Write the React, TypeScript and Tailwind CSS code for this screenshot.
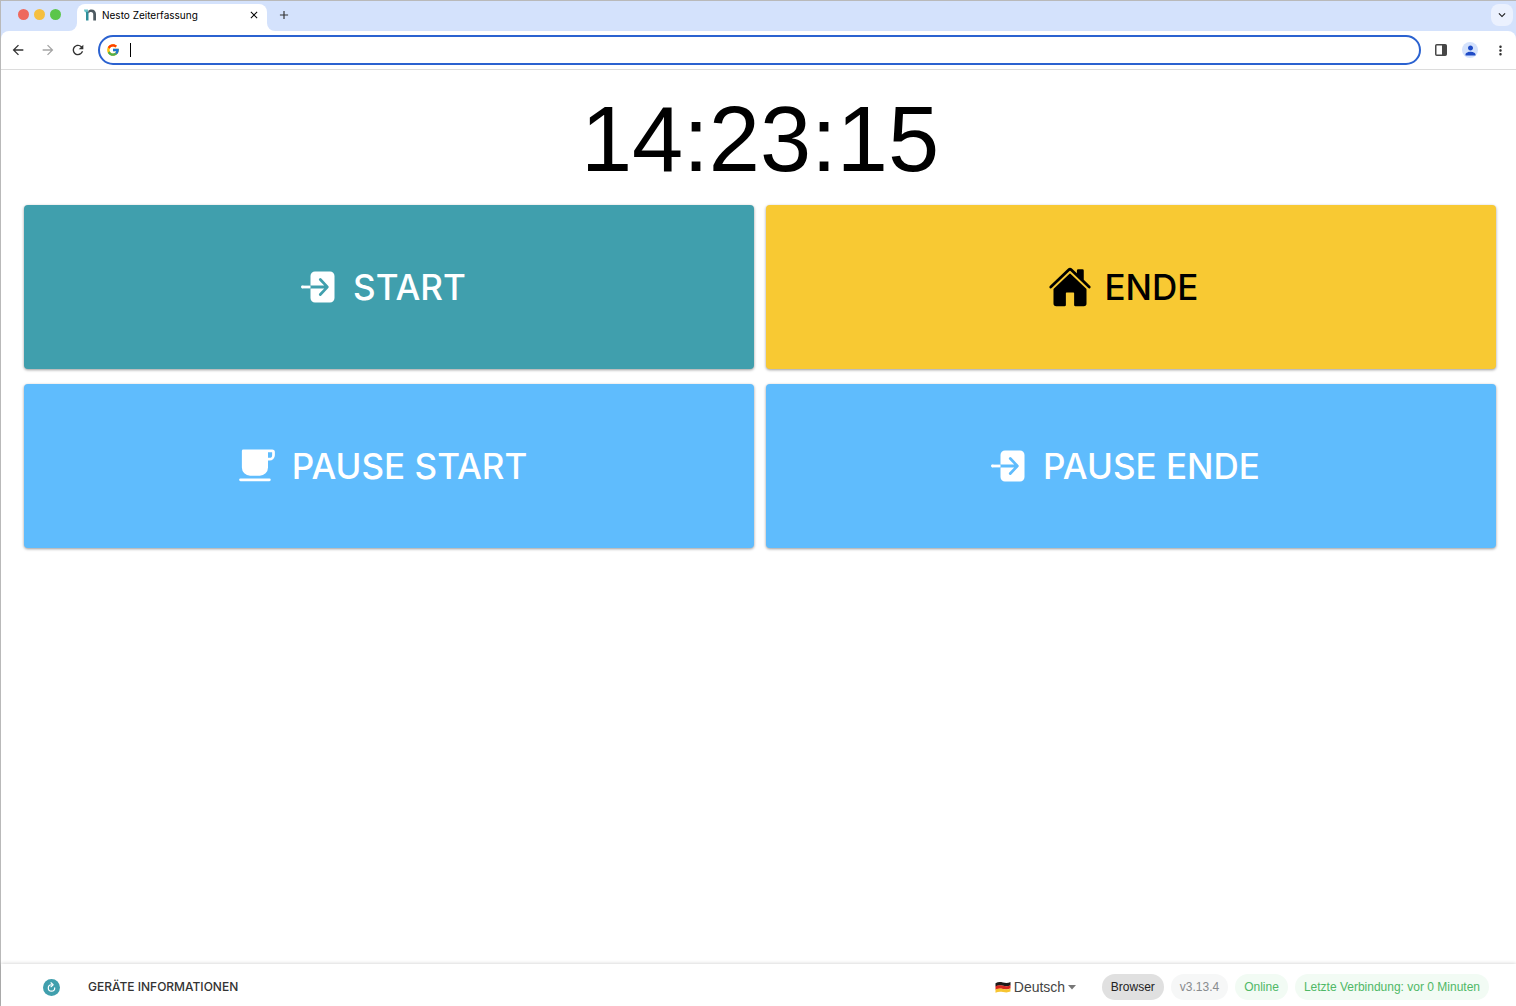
import type { ReactNode } from "react"
import { FcGoogle } from "react-icons/fc"
import { IoCafe, IoHome } from "react-icons/io5"
import { MdAdd, MdArrowBack, MdArrowForward, MdClose, MdExpandMore, MdMoreVert, MdPerson, MdRefresh } from "react-icons/md"

function NestoLogo() {
  return (
    <svg className="w-3 h-3" viewBox="0 0 24 24" fill="none" aria-hidden="true">
      <path d="M0 1h8v6H4.500C2 7 0 4.500 0 1Z" fill="#6cc5cb" />
      <path d="M4 5.500h5V23H4Z" fill="#2f8f9a" />
      <path d="M8.500 3.500C10.500 1.700 12.500 1 15 1c5.500 0 9 3.500 9 9v13h-5.500V11c0-3.200-1.500-5-4.500-5-2.200 0-4 1-5.500 3Z" fill="#4d5a61" />
    </svg>
  )
}

function SidePanelIcon() {
  return (
    <svg className="w-3 h-3" viewBox="0 0 12 12" aria-hidden="true">
      <rect x="0.75" y="0.75" width="10.500" height="10.500" rx="1" fill="none" stroke="#474747" strokeWidth="1.500" />
      <path d="M7 1h4v10H7Z" fill="#474747" />
    </svg>
  )
}

function EnterIcon() {
  return (
    <svg className="w-11 h-11" viewBox="0 0 44 44" fill="none" aria-hidden="true">
      <path
        d="M19 6.500h15a4.500 4.500 0 0 1 4.500 4.500v22a4.500 4.500 0 0 1-4.500 4.500H19a4.500 4.500 0 0 1-4.500-4.500v-9.600h13.700l-4.900 5a1.400 1.400 0 0 0 2 2l7-7.400a1.400 1.400 0 0 0 0-2l-7-7.400a1.400 1.400 0 0 0-2 2l4.900 5H14.500V11A4.500 4.500 0 0 1 19 6.500Z"
        fill="currentColor"
      />
      <path d="M6.400 22h8.100" stroke="currentColor" strokeWidth="2.800" />
      <circle cx="6.400" cy="22" r="1.400" fill="currentColor" />
    </svg>
  )
}

function GermanFlag() {
  return (
    <svg className="w-4 h-3" viewBox="0 0 16 12" aria-hidden="true">
      <path d="M.5 2.200C3 .8 5 .8 8 1.500s5 .6 7.500-.5v3.400c-2.500 1-4.700 1-7.500.4S3 4.300.5 5.500Z" fill="#1d1a18" />
      <path d="M.5 5.300C3 4 5 4 8 4.700s5 .6 7.500-.5v3.400c-2.500 1-4.700 1-7.500.4S3 7.500.5 8.700Z" fill="#d8281f" />
      <path d="M.5 8.500C3 7.300 5 7.300 8 7.900s5 .6 7.500-.5v3.200c-2.500 1-4.700 1-7.500.4S3 10.600.5 11.700Z" fill="#f7c531" />
    </svg>
  )
}

function TabStrip() {
  return (
    <div className="flex items-end justify-between h-[30px]">
      <div className="flex items-end">
        <div className="flex items-center gap-[5px] h-[27px] pl-[17px] pr-4 pb-[6px]">
          <button aria-label="Schließen" className="w-[11px] h-[11px] rounded-full bg-[#ee695e]"></button>
          <button aria-label="Minimieren" className="w-[11px] h-[11px] rounded-full bg-[#f5bf3f]"></button>
          <button aria-label="Maximieren" className="w-[11px] h-[11px] rounded-full bg-[#5bc64a]"></button>
        </div>
        <div className="relative flex items-center w-[190px] h-[27px] px-[7px] pb-[6px] rounded-t-lg bg-white">
          {/* Curved feet of the active tab */}
          <span className="absolute bottom-0 right-full w-2 h-2 bg-white">
            <span className="block w-2 h-2 rounded-br-lg bg-[#d4e2fc]"></span>
          </span>
          <span className="absolute bottom-0 left-full w-2 h-2 bg-white">
            <span className="block w-2 h-2 rounded-bl-lg bg-[#d4e2fc]"></span>
          </span>
          <NestoLogo />
          <span className="flex-1 ml-[6px] text-[10px] leading-4 text-black">Nesto Zeiterfassung</span>
          <button aria-label="Tab schließen">
            <MdClose className="w-3 h-3 text-black" />
          </button>
        </div>
        <button aria-label="Neuer Tab" className="flex items-center h-[27px] pb-[6px] ml-[10px]">
          <MdAdd className="w-[14px] h-[14px] text-[#333]" />
        </button>
      </div>
      <button aria-label="Tabs durchsuchen" className="flex items-center justify-center w-[22px] h-[22px] mb-[5px] mr-[3px] rounded-lg bg-[#ebf1fe]">
        <MdExpandMore className="w-[14px] h-[14px] text-[#1f1f1f]" />
      </button>
    </div>
  )
}

function Toolbar() {
  return (
    <div className="flex items-center h-[39px] pl-[9px] pr-2 border-b border-[#dcdcdc] rounded-t-lg bg-white">
      <div className="flex items-center gap-[14px]">
        <button aria-label="Zurück"><MdArrowBack className="w-4 h-4 text-[#333]" /></button>
        <button aria-label="Vorwärts"><MdArrowForward className="w-4 h-4 text-[#a5a5a5]" /></button>
        <button aria-label="Neu laden"><MdRefresh className="w-4 h-4 text-[#333]" /></button>
      </div>
      <div className="flex flex-1 items-center h-[30px] ml-3 mr-[13px] pl-[6px] border-2 border-[#2b62d0] rounded-full bg-white">
        <FcGoogle className="w-[14px] h-[14px]" />
        <span className="w-px h-[14px] ml-[10px] bg-black"></span>
        <input type="text" aria-label="Adresse" className="flex-1 min-w-0 px-1 text-xs outline-none" />
      </div>
      <div className="flex items-center gap-[14px]">
        <button aria-label="Seitenleiste" className="flex items-center justify-center w-[14px] h-4"><SidePanelIcon /></button>
        <button aria-label="Profil" className="flex items-center justify-center w-4 h-4 rounded-full bg-[#d4e2fc]">
          <MdPerson className="w-[15px] h-[15px] text-[#1f4bc6]" />
        </button>
        <button aria-label="Menü" className="flex items-center justify-center w-4 h-4">
          <MdMoreVert className="w-[15px] h-[15px] text-[#333]" />
        </button>
      </div>
    </div>
  )
}

function ActionButton({ icon, label, className }: { icon: ReactNode; label: string; className: string }) {
  return (
    <button
      className={`flex items-center justify-center gap-[13px] h-[164px] pr-4 rounded-sm text-[35px] leading-10 font-medium uppercase shadow-[0_1px_3px_rgba(0,0,0,0.4)] ${className}`}
    >
      {icon}
      {label}
    </button>
  )
}

function Chip({ label, className }: { label: string; className: string }) {
  return <span className={`px-[9px] rounded-full text-[12px] leading-[26px] ${className}`}>{label}</span>
}

function Footer() {
  return (
    <footer className="flex items-center justify-between pt-[10px] pb-[6px] pl-[42px] pr-[27px] bg-white shadow-[0_0_4px_rgba(0,0,0,0.22)]">
      <div className="flex items-center gap-7">
        <button aria-label="Aktualisieren" className="flex items-center justify-center w-[17px] h-[17px] rounded-full bg-[#409fad]">
          <svg className="w-[11px] h-[11px]" viewBox="0 0 12 12" fill="none" stroke="white" aria-hidden="true">
            <path d="M6 3a3.500 3.500 0 1 0 3.500 3.500" strokeWidth="1.300" strokeLinecap="round" />
            <path d="m5.500.8 2.300 2.200-2.300 2.200" strokeWidth="1.200" strokeLinecap="round" strokeLinejoin="round" />
          </svg>
        </button>
        <button className="font-[Inter,sans-serif] text-[12px] leading-4 font-medium uppercase text-[#333]">Geräte Informationen</button>
      </div>
      <div className="flex items-center">
        <GermanFlag />
        <div className="relative flex items-center ml-[3px] mr-[26px]">
          <select aria-label="Sprache" className="appearance-none w-[62px] text-[14px] leading-5 text-[#444] bg-transparent outline-none">
            <option>Deutsch</option>
          </select>
          <svg className="absolute right-0 w-2 h-[5px] pointer-events-none" viewBox="0 0 8 5" aria-hidden="true">
            <path d="M0 0h8L4 4.500Z" fill="#777" />
          </svg>
        </div>
        <div className="flex items-center gap-[7px]">
          <Chip label="Browser" className="bg-[#e0e0e0] text-[#222]" />
          <Chip label="v3.13.4" className="bg-[#f6f7f7] text-[#888b8e]" />
          <Chip label="Online" className="bg-[#f2fbf4] text-[#4fb866]" />
          <Chip label="Letzte Verbindung: vor 0 Minuten" className="bg-[#f2fbf4] text-[#4fb866]" />
        </div>
      </div>
    </footer>
  )
}

export default function App() {
  return (
    <div className="flex flex-col min-h-screen border-t border-l border-[#b9b9b9] bg-white font-['Liberation_Sans',Arial,sans-serif]">
      <header className="bg-[#d4e2fc] font-[Inter,sans-serif]">
        <TabStrip />
        <Toolbar />
      </header>
      <main className="flex-1 pl-[23px] pr-5">
        <h1 className="pt-[19px] pb-4 text-center text-[92px] leading-[100px] text-black">14:23:15</h1>
        <div className="grid grid-cols-2 gap-x-3 gap-y-[15px] font-[Inter,sans-serif]">
          <ActionButton icon={<EnterIcon />} label="Start" className="bg-[#409fad] text-white" />
          <ActionButton icon={<IoHome className="w-11 h-11" />} label="Ende" className="bg-[#f8c933] text-black" />
          <ActionButton icon={<IoCafe className="w-11 h-11" />} label="Pause Start" className="bg-[#5fbcfd] text-white" />
          <ActionButton icon={<EnterIcon />} label="Pause Ende" className="bg-[#5fbcfd] text-white" />
        </div>
      </main>
      <Footer />
    </div>
  )
}
